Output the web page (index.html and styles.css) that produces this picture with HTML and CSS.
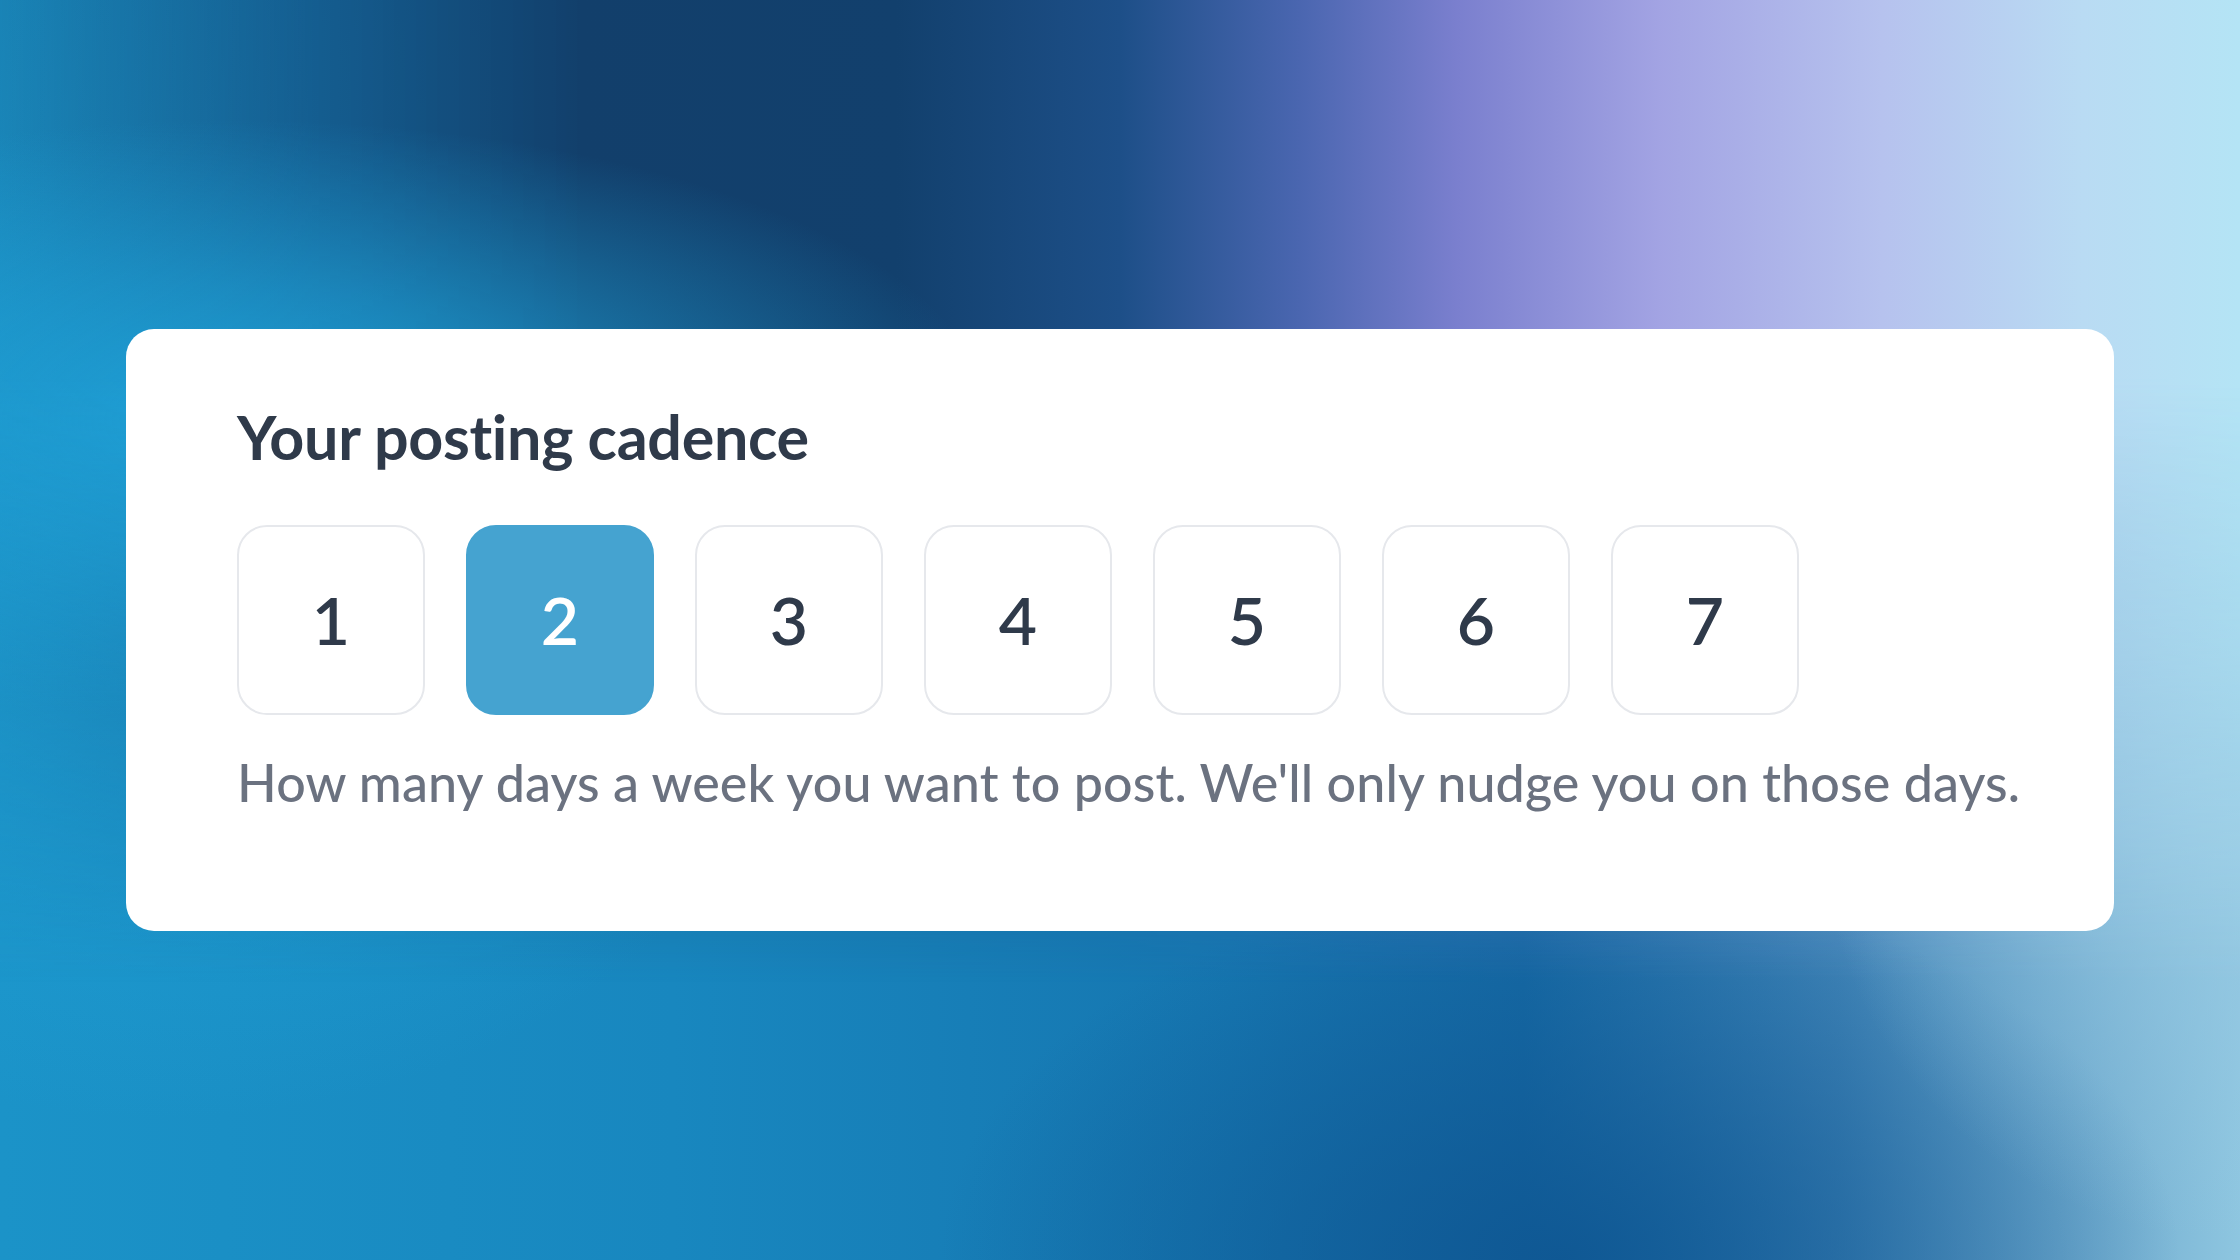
FILE: index.html
```html
<!DOCTYPE html>
<html lang="en">
<head>
<meta charset="utf-8">
<title>Posting cadence</title>
<link rel="stylesheet" href="styles.css">
</head>
<body>
<main class="stage">
  <section class="card">
    <h2 class="card-title">Your posting cadence</h2>
    <div class="days">
      <button class="day">1</button>
      <button class="day day--active">2</button>
      <button class="day">3</button>
      <button class="day">4</button>
      <button class="day">5</button>
      <button class="day">6</button>
      <button class="day">7</button>
    </div>
    <p class="hint">How many days a week you want to post. We'll only nudge you on those days.</p>
  </section>
</main>
</body>
</html>
```
FILE: styles.css
```css
html, body {
  margin: 0;
  padding: 0;
  width: 100%;
  height: 100%;
}

body {
  font-family: "Lato", "Noto Sans", sans-serif;
  overflow: hidden;
}

.stage {
  position: relative;
  width: 2240px;
  height: 1260px;
  display: flex;
  align-items: center;
  justify-content: center;
  background:
    radial-gradient(ellipse 420px 420px at 2240px 820px, rgba(150, 200, 226, 0.85) 0%, rgba(150, 200, 226, 0) 100%),
    radial-gradient(ellipse 620px 380px at 1560px 1260px, rgba(14, 86, 146, 0.9) 0%, rgba(14, 86, 146, 0) 100%),
    radial-gradient(ellipse 700px 600px at 160px 520px, rgba(31, 162, 216, 1) 0%, rgba(31, 162, 216, 0) 100%),
    linear-gradient(90deg, #1b93c8 0%, #1887bf 30%, #1676b0 55%, #166aa5 68%, #3f83b6 82%, #6aa6cb 92%, #8ec6e0 100%);
}

.stage::before {
  content: "";
  position: absolute;
  inset: 0;
  background:
    radial-gradient(ellipse 760px 300px at 230px 420px, rgba(31, 160, 214, 1) 0%, rgba(31, 160, 214, 0.6) 45%, rgba(31, 160, 214, 0) 100%),
    linear-gradient(90deg,
    rgba(24, 118, 166, 0.55) 0%,
    rgba(20, 88, 138, 0.9) 14%,
    #123f6b 26%,
    #12406d 40%,
    #1d4f88 50%,
    #4a66b0 58%,
    #7a7fce 65%,
    #a2a3e3 74%,
    #b6c2ee 84%,
    #b9dbf3 93%,
    #b4e4f5 100%);
  -webkit-mask-image: linear-gradient(180deg, #000 0%, #000 30%, rgba(0,0,0,0.6) 52%, transparent 78%);
  mask-image: linear-gradient(180deg, #000 0%, #000 30%, rgba(0,0,0,0.6) 52%, transparent 78%);
}

.card {
  position: relative;
  width: 1988px;
  box-sizing: border-box;
  padding: 70px 80px 118px 111px;
  background: #ffffff;
  border-radius: 28px;
}

.card-title {
  margin: 0;
  font-size: 61px;
  line-height: 76.8px;
  font-weight: 700;
  color: #2f3a4a;
  letter-spacing: -0.3px;
}

.days {
  display: flex;
  gap: 41px;
  margin-top: 49px;
}

.day {
  width: 188px;
  height: 190px;
  box-sizing: border-box;
  border: 2px solid #e6e8ec;
  border-radius: 30px;
  background: #ffffff;
  font-family: "Lato", "Noto Sans", sans-serif;
  font-size: 66px;
  font-weight: 600;
  color: #2f3a4a;
  padding: 0;
  display: flex;
  align-items: center;
  justify-content: center;
}

.day--active {
  background: #45a3d0;
  border-color: #45a3d0;
  color: #ffffff;
}

.hint {
  margin: 36px 0 0;
  font-size: 52px;
  line-height: 62.4px;
  font-weight: 500;
  color: #6b7280;
  white-space: nowrap;
  letter-spacing: 0.13px;
}
```
